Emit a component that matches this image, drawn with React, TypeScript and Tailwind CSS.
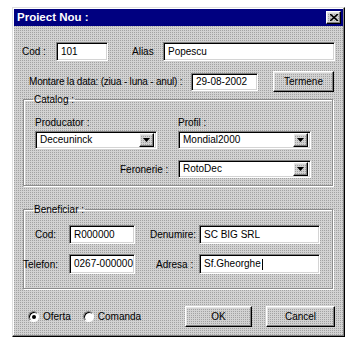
import React from 'react';

const dither =
  'bg-[image:conic-gradient(#a2a2a2_0_25%,#d2d2d2_0)] bg-[length:2px_2px]';
const sunken =
  'bg-white border border-t-[#808080] border-l-[#808080] border-b-white border-r-white shadow-[inset_1px_1px_0_#000,inset_-1px_-1px_0_#d4d4d4]';
const raised =
  'border border-t-white border-l-white border-b-black border-r-black shadow-[inset_-1px_-1px_0_#808080,inset_1px_1px_0_#e4e4e4]';

const TextBox = ({ value, className, caret }: { value: string; className: string; caret?: boolean }) => (
  <div className={`${sunken} ${className} flex items-center pl-[4px] leading-none whitespace-nowrap overflow-hidden`}>
    <span>{value}</span>
    {caret && <span className="ml-[1px] w-px h-[11px] bg-black" />}
  </div>
);

const Combo = ({ value, className }: { value: string; className: string }) => (
  <div className={`${sunken} ${className} flex items-center justify-between pl-[4px] pr-[2px] leading-none whitespace-nowrap`}>
    <span>{value}</span>
    <div className={`${raised} ${dither} w-[15px] h-[14px] flex items-center justify-center`}>
      <svg width="7" height="4" viewBox="0 0 7 4">
        <path d="M0 0h7L3.5 4z" fill="#000" />
      </svg>
    </div>
  </div>
);

const Button = ({ label, className }: { label: string; className: string }) => (
  <div className={`${raised} ${dither} ${className} flex items-center justify-center`}>
    {label}
  </div>
);

const Radio = ({ checked, label }: { checked?: boolean; label: string }) => (
  <div className="flex items-center gap-[4px]">
    <div className="w-[11px] h-[11px] rounded-full bg-white border border-t-[#808080] border-l-[#808080] border-b-white border-r-white shadow-[inset_1px_1px_0_#000] flex items-center justify-center">
      {checked && <div className="w-[4px] h-[4px] rounded-full bg-black" />}
    </div>
    <span>{label}</span>
  </div>
);

export default function App() {
  return (
    <div className="w-[357px] h-[344px] bg-white pt-[7px] pl-[12px] text-black text-[10px] whitespace-nowrap font-['Liberation_Sans',Arial,sans-serif]">
      <div className={`w-[333px] h-[330px] border border-t-[#dfdfdf] border-l-[#dfdfdf] border-b-black border-r-black shadow-[inset_-1px_-1px_0_#808080,inset_1px_1px_0_white] p-[1px] ${dither}`}>
        {/* title bar */}
        <div className="h-[17px] bg-[#000080] flex items-center justify-between pl-[3px] pr-[2px]">
          <span className="text-white font-bold text-[11.5px]">Proiect Nou :</span>
          <div className={`${raised} ${dither} w-[15px] h-[13px] flex items-center justify-center`}>
            <svg width="8" height="7" viewBox="0 0 8 7">
              <path d="M0 0L8 7M8 0L0 7" stroke="#000" strokeWidth="1.6" />
            </svg>
          </div>
        </div>

        {/* Cod / Alias */}
        <div className="mt-[16px] flex items-center h-[19px] pl-[8px]">
          <span className="w-[34px]">Cod :</span>
          <TextBox value="101" className="w-[52px] h-[19px]" />
          <span className="ml-[24px] w-[31px]">Alias</span>
          <TextBox value="Popescu" className="w-[172px] h-[19px]" />
        </div>

        {/* Montare */}
        <div className="mt-[10px] flex items-center h-[21px] pl-[15px]">
          <span className="w-[162px] tracking-[-0.2px]">Montare la data: (ziua - luna - anul) :</span>
          <TextBox value="29-08-2002" className="w-[67px] h-[18px]" />
          <Button label="Termene" className="ml-[15px] w-[61px] h-[21px]" />
        </div>

        {/* Catalog */}
        <fieldset className="ml-[9px] mt-[1px] w-[310px] h-[93px] border border-[#8c8c8c] shadow-[1px_1px_0_white,inset_1px_1px_0_white] px-[11px]">
          <legend className="px-[1px] ml-[-2px] leading-[13px]">Catalog :</legend>
          <div className="mt-[10px] flex gap-[21px]">
            <div className="flex flex-col w-[122px]">
              <span className="leading-[13px]">Producator :</span>
              <Combo value="Deceuninck" className="mt-[2px] w-[122px] h-[18px]" />
            </div>
            <div className="flex flex-col w-[133px]">
              <span className="leading-[13px]">Profil :</span>
              <Combo value="Mondial2000" className="mt-[2px] w-[133px] h-[18px]" />
            </div>
          </div>
          <div className="mt-[11px] flex items-center">
            <span className="w-[143px] pl-[85px]">Feronerie :</span>
            <Combo value="RotoDec" className="w-[133px] h-[18px]" />
          </div>
        </fieldset>

        {/* Beneficiar */}
        <fieldset className="ml-[9px] mt-[17px] w-[310px] h-[86px] border border-[#8c8c8c] shadow-[1px_1px_0_white,inset_1px_1px_0_white]">
          <legend className="px-[1px] ml-[9px] leading-[13px]">Beneficiar :</legend>
          <div className="mt-[9px] flex items-center h-[19px]">
            <span className="w-[45px] pl-[11px]">Cod:</span>
            <TextBox value="R000000" className="w-[66px] h-[19px]" />
            <span className="ml-[15px] w-[49px]">Denumire:</span>
            <TextBox value="SC BIG SRL" className="w-[121px] h-[19px]" />
          </div>
          <div className="mt-[10px] flex items-center h-[20px]">
            <span className="w-[45px] ml-[-1px] mr-[1px]">Telefon:</span>
            <TextBox value="0267-000000" className="w-[66px] h-[20px]" />
            <span className="ml-[21px] w-[43px]">Adresa :</span>
            <TextBox value="Sf.Gheorghe" caret className="w-[121px] h-[20px]" />
          </div>
        </fieldset>

        {/* bottom */}
        <div className="mt-[17px] flex items-center h-[21px] pl-[14px]">
          <div className="flex items-center gap-[12px] w-[157px]">
            <Radio checked label="Oferta" />
            <Radio label="Comanda" />
          </div>
          <Button label="OK" className="w-[67px] h-[21px]" />
          <Button label="Cancel" className="ml-[14px] w-[69px] h-[21px]" />
        </div>
      </div>
    </div>
  );
}
